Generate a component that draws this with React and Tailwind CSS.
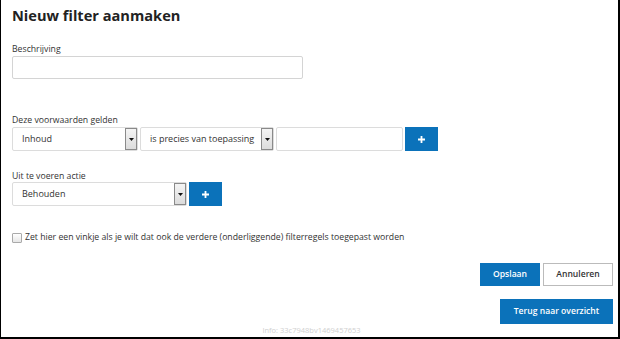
import React from "react";

function Arrow() {
  return (
    <div className="flex h-full w-[12px] shrink-0 items-center justify-center border border-[#8a8a8a] bg-gradient-to-b from-[#f4f4f4] to-[#dcdcdc]">
      <svg width="5" height="3" viewBox="0 0 5 3"><path d="M0 0H5L2.5 3Z" fill="#111" /></svg>
    </div>
  );
}

function Select({ label, width }) {
  return (
    <div className={`flex h-[24px] shrink-0 items-stretch rounded-[2px] border border-[#dcdcdc] bg-white ${width}`}>
      <div className="flex flex-1 items-center whitespace-nowrap pl-[9px] text-[9px] text-[#333]">{label}</div>
      <Arrow />
    </div>
  );
}

function PlusBtn() {
  return (
    <div className="flex h-[24px] w-[33px] shrink-0 items-center justify-center bg-[#0b72ba]">
      <svg width="7" height="7" viewBox="0 0 7 7"><path d="M3.5 0V7M0 3.5H7" stroke="#fff" strokeWidth="1.8" /></svg>
    </div>
  );
}

export default function App() {
  return (
    <div className="h-[339px] w-[620px] overflow-hidden bg-white" style={{ fontFamily: '"Open Sans", sans-serif' }}>
      <div className="flex h-full flex-col border-b-2 border-l border-r-2 border-black pl-[11px] pr-[5px]">
        <h1 className="mt-[5px] shrink-0 text-[14.6px] font-bold leading-[20px] text-[#222]">Nieuw filter aanmaken</h1>
        <div className="mt-[18px] shrink-0 text-[8.7px] leading-[12px] text-[#333]">Beschrijving</div>
        <div className="mt-[1px] h-[23px] w-[291px] shrink-0 rounded-[2px] border border-[#d4d4d4]" />
        <div className="mt-[35px] shrink-0 text-[8.7px] leading-[12px] text-[#333]">Deze voorwaarden gelden</div>
        <div className="mt-[1px] flex shrink-0 gap-[2px]">
          <Select label="Inhoud" width="w-[126px]" />
          <Select label="is precies van toepassing" width="w-[134px]" />
          <div className="h-[24px] w-[127px] shrink-0 rounded-[2px] border border-[#dcdcdc]" />
          <PlusBtn />
        </div>
        <div className="mt-[19px] shrink-0 text-[8.7px] leading-[12px] text-[#333]">Uit te voeren actie</div>
        <div className="flex shrink-0 gap-[2px]">
          <Select label="Behouden" width="w-[175px]" />
          <PlusBtn />
        </div>
        <label className="mt-[26px] flex h-[12px] shrink-0 items-center gap-[3px] text-[8.7px] text-[#333]">
          <span className="h-[10px] w-[10px] shrink-0 rounded-[1px] border border-[#aaa] bg-gradient-to-b from-[#fff] to-[#e6e6e6]" />
          Zet hier een vinkje als je wilt dat ook de verdere (onderliggende) filterregels toegepast worden
        </label>
        <div className="mt-[19px] flex shrink-0 justify-end gap-[3px]">
          <div className="flex h-[23px] w-[60px] items-center justify-center bg-[#0b72ba] text-[8.6px] font-semibold text-white">Opslaan</div>
          <div className="flex h-[23px] w-[70px] items-center justify-center border border-[#bbb] bg-white text-[8.6px] font-semibold text-[#333]">Annuleren</div>
        </div>
        <div className="mt-[13px] flex shrink-0 justify-end">
          <div className="flex h-[25px] w-[113px] items-center justify-center bg-[#0b72ba] text-[8.6px] font-semibold text-white">Terug naar overzicht</div>
        </div>
        <div className="mt-[1px] shrink-0 pr-[2px] text-center text-[7.5px] leading-[10px] text-[#d0d0d0]">Info: 33c7948bv1469457653</div>
      </div>
    </div>
  );
}
